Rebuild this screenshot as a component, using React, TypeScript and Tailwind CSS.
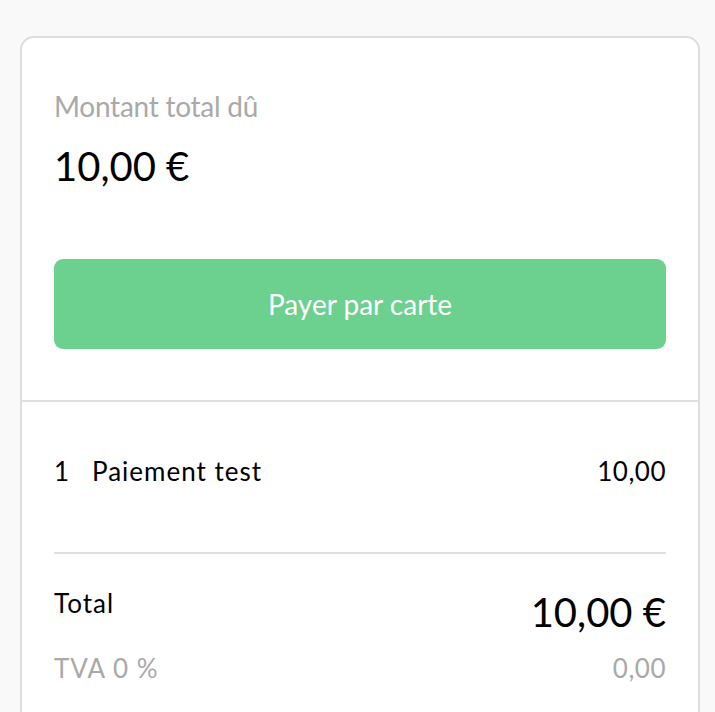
import React from "react";

export default function App() {
  return (
    <div
      className="min-h-[712px] w-full bg-[#f9f9f9] pt-9"
      style={{ fontFamily: "Lato, 'Open Sans', sans-serif" }}
    >
      <div className="ml-[20px] w-[680px] rounded-[14px] border-2 border-[#dedede] bg-white">
        <div className="px-8 pt-[51px] pb-[51px]">
          <div className="text-[28px] leading-[34px] tracking-[-0.25px] text-[#a9a9a9]">Montant total dû</div>
          <div className="mt-[19px] text-[40px] leading-[48px] text-black">10,00 €</div>
          <button className="mt-[69px] flex h-[90px] w-full items-center justify-center rounded-[9px] bg-[#6cd18f] text-[28px] text-white">
            Payer par carte
          </button>
        </div>
        <div className="h-[2px] w-full bg-[#e0e0e0]" />
        <div className="px-8 pt-[54px] pb-20">
          <div className="flex items-start justify-between text-[26px] leading-[31px] text-black">
            <div className="flex">
              <span className="w-[38px]">1</span>
              <span className="tracking-[1px]">Paiement test</span>
            </div>
            <span className="tracking-[0.5px]">10,00</span>
          </div>
          <div className="mt-[65px] h-[2px] w-full bg-[#e0e0e0]" />
          <div className="mt-[34px] flex items-start justify-between">
            <span className="text-[26px] leading-[31px] tracking-[1px] text-black">Total</span>
            <span className="text-[40px] leading-[48px] text-black">10,00 €</span>
          </div>
          <div className="mt-[17px] flex items-start justify-between text-[26px] leading-[31px] text-[#a9a9a9]">
            <span className="tracking-[1px]">TVA 0 %</span>
            <span className="tracking-[0.5px]">0,00</span>
          </div>
        </div>
      </div>
    </div>
  );
}
